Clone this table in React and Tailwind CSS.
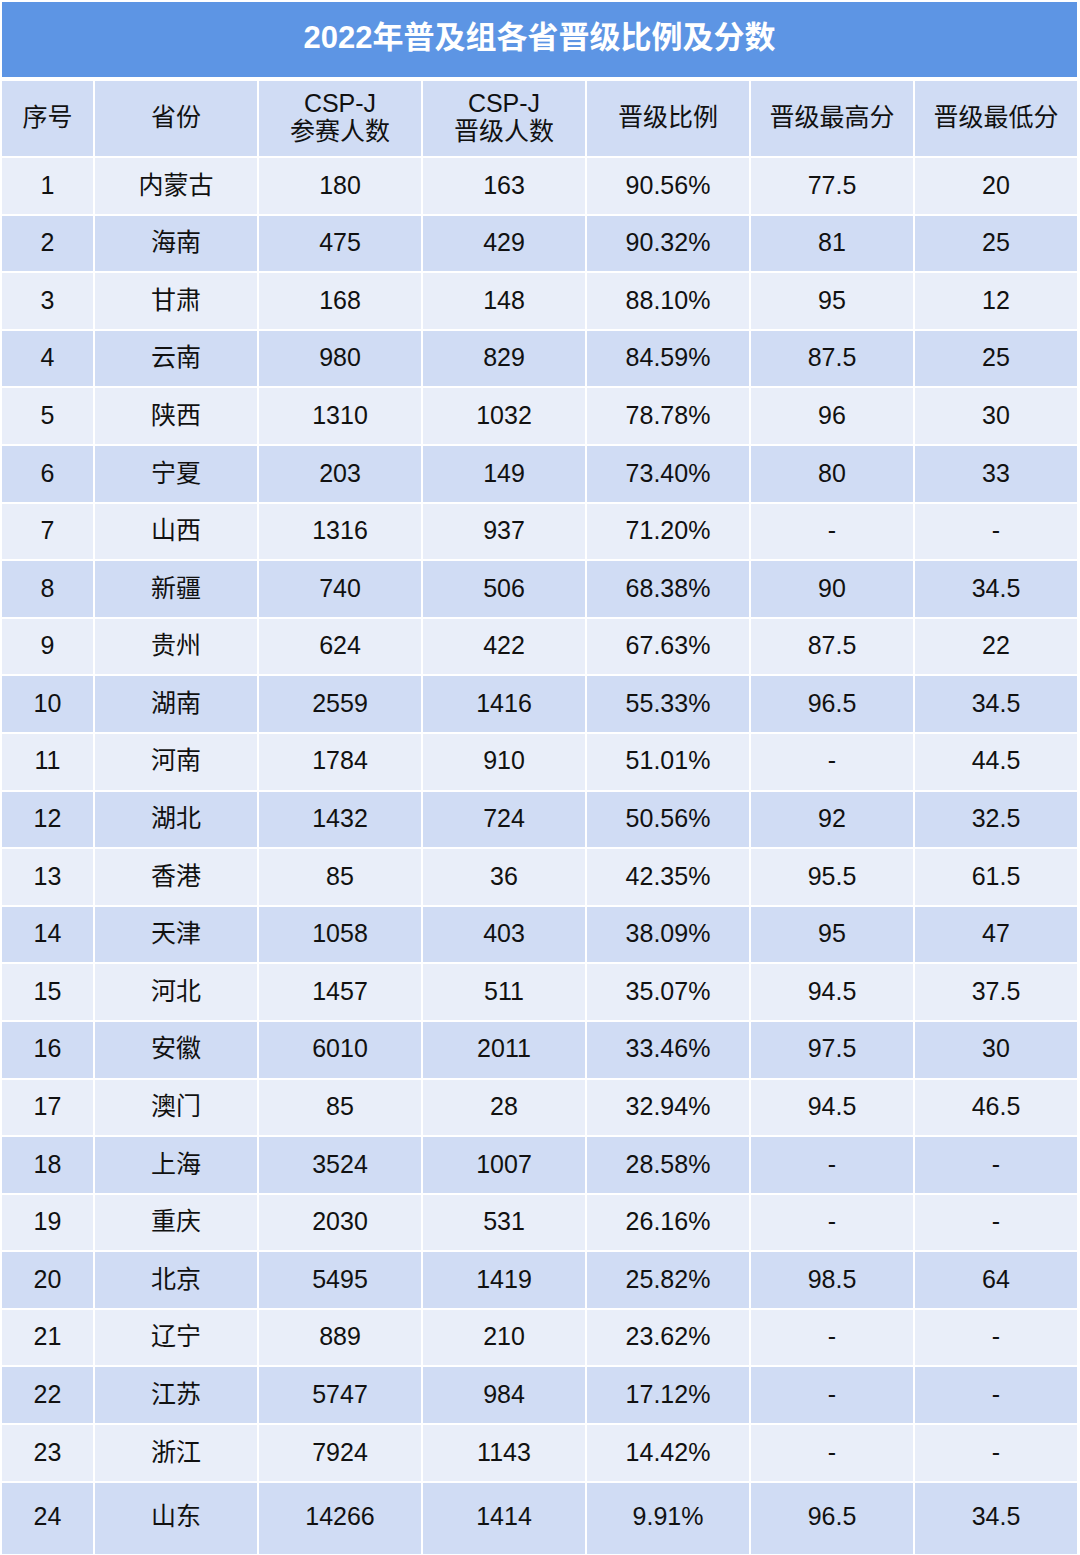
const rows = [
  ['1', '内蒙古', '180', '163', '90.56%', '77.5', '20'],
  ['2', '海南', '475', '429', '90.32%', '81', '25'],
  ['3', '甘肃', '168', '148', '88.10%', '95', '12'],
  ['4', '云南', '980', '829', '84.59%', '87.5', '25'],
  ['5', '陕西', '1310', '1032', '78.78%', '96', '30'],
  ['6', '宁夏', '203', '149', '73.40%', '80', '33'],
  ['7', '山西', '1316', '937', '71.20%', '-', '-'],
  ['8', '新疆', '740', '506', '68.38%', '90', '34.5'],
  ['9', '贵州', '624', '422', '67.63%', '87.5', '22'],
  ['10', '湖南', '2559', '1416', '55.33%', '96.5', '34.5'],
  ['11', '河南', '1784', '910', '51.01%', '-', '44.5'],
  ['12', '湖北', '1432', '724', '50.56%', '92', '32.5'],
  ['13', '香港', '85', '36', '42.35%', '95.5', '61.5'],
  ['14', '天津', '1058', '403', '38.09%', '95', '47'],
  ['15', '河北', '1457', '511', '35.07%', '94.5', '37.5'],
  ['16', '安徽', '6010', '2011', '33.46%', '97.5', '30'],
  ['17', '澳门', '85', '28', '32.94%', '94.5', '46.5'],
  ['18', '上海', '3524', '1007', '28.58%', '-', '-'],
  ['19', '重庆', '2030', '531', '26.16%', '-', '-'],
  ['20', '北京', '5495', '1419', '25.82%', '98.5', '64'],
  ['21', '辽宁', '889', '210', '23.62%', '-', '-'],
  ['22', '江苏', '5747', '984', '17.12%', '-', '-'],
  ['23', '浙江', '7924', '1143', '14.42%', '-', '-'],
  ['24', '山东', '14266', '1414', '9.91%', '96.5', '34.5'],
]

const headers = [
  ['序号'],
  ['省份'],
  ['CSP-J', '参赛人数'],
  ['CSP-J', '晋级人数'],
  ['晋级比例'],
  ['晋级最高分'],
  ['晋级最低分'],
]

const font = { fontFamily: '"Liberation Sans", "Noto Sans CJK SC", sans-serif' }

export default function App() {
  return (
    <div className="w-[1080px] h-[1555px] overflow-hidden bg-white pl-[2px] pt-[2px]" style={font}>
      <div className="w-[1075px] h-[75px] bg-[#5d95e4] flex items-center justify-center pb-[3px] text-white text-[31px] font-bold">
        2022年普及组各省晋级比例及分数
      </div>
      <div className="mt-[4px] w-[1075px] grid grid-cols-[91px_repeat(6,162px)] gap-[2px] text-[#111] text-[25px]">
        {headers.map((h, i) => (
          <div key={i} className="h-[75px] bg-[#d0dcf4] flex flex-col items-center justify-center pb-[4px] leading-[28px]">
            {h.map((t, j) => <span key={j}>{t}</span>)}
          </div>
        ))}
        {rows.map((r, ri) => {
          const last = ri === rows.length - 1
          const bg = ri % 2 === 0 ? 'bg-[#e9eef9]' : 'bg-[#d0dcf4]'
          return r.map((c, ci) => (
            <div key={ri + '-' + ci}
              className={`${bg} flex items-center justify-center ${last ? 'h-[71px] pb-[3px]' : 'h-[55.6px] pb-[1px]'}`}>
              {c}
            </div>
          ))
        })}
      </div>
    </div>
  )
}
